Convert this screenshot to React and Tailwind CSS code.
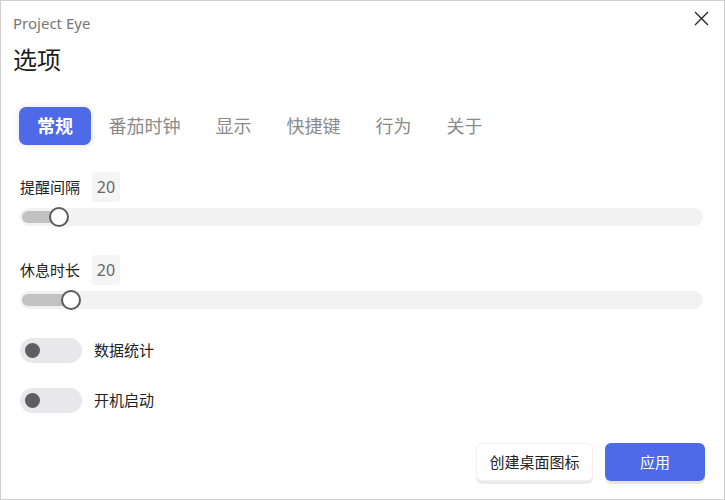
import React from "react";

const font = { fontFamily: '"Noto Sans", "Noto Sans CJK SC", sans-serif' };

function Slider({ pos }) {
  return (
    <div className="relative mt-[6px] h-[18px] w-full rounded-full bg-[#f2f2f2]">
      <div
        className="absolute left-[2px] top-[3px] h-[12px] rounded-full bg-[#c2c2c2]"
        style={{ width: pos }}
      />
      <div
        className="absolute top-1/2 h-[20px] w-[20px] -translate-x-1/2 -translate-y-1/2 rounded-full border-[2.5px] border-[#5a5a5a] bg-white"
        style={{ left: pos }}
      />
    </div>
  );
}

function Toggle({ label, className }) {
  return (
    <div className={"flex items-center " + className}>
      <div className="flex h-[25px] w-[62px] items-center rounded-full bg-[#e8e8ea] pl-[5px]">
        <div className="h-[15px] w-[15px] rounded-full bg-[#5f5f62]" />
      </div>
      <span className="ml-[12px] text-[15px] text-[#222]">{label}</span>
    </div>
  );
}

export default function App() {
  const tabs = ["番茄时钟", "显示", "快捷键", "行为", "关于"];
  return (
    <div
      className="relative flex h-[500px] w-[725px] flex-col border border-[#cfcfcf] bg-white"
      style={font}
    >
      <button className="absolute right-[15px] top-[10px] text-[#222]">
        <svg width="15" height="15" viewBox="0 0 15 15">
          <path d="M1 1L14 14M14 1L1 14" stroke="#222" strokeWidth="1.3" fill="none" />
        </svg>
      </button>
      <div className="pl-[12px] pt-[12px]">
        <div className="text-[15px] leading-[20px] text-[#777]">Project Eye</div>
        <div className="mt-[11px] text-[24px] leading-[32px] text-[#1a1a1a]">选项</div>
      </div>
      <div className="ml-[18px] mt-[31px] flex h-[38px] items-center">
        <div className="flex h-[38px] items-center rounded-[7px] bg-[#4e6ae8] px-[18px] text-[18px] font-bold text-white shadow-[0_0_6px_rgba(0,0,0,0.12)]">
          常规
        </div>
        {tabs.map((t) => (
          <div key={t} className="px-[17.5px] text-[18px] text-[#8a8a8a]">
            {t}
          </div>
        ))}
      </div>
      <div className="px-[19px] pr-[21px]">
        <div className="mt-[27px] flex h-[30px] items-center">
          <span className="text-[15px] text-[#222]">提醒间隔</span>
          <span className="ml-[12px] flex h-[30px] w-[28px] items-center justify-center rounded-[3px] bg-[#f5f5f5] text-[16px] text-[#666]">
            20
          </span>
        </div>
        <Slider pos={39} />
        <div className="mt-[29px] flex h-[30px] items-center">
          <span className="text-[15px] text-[#222]">休息时长</span>
          <span className="ml-[12px] flex h-[30px] w-[28px] items-center justify-center rounded-[3px] bg-[#f5f5f5] text-[16px] text-[#666]">
            20
          </span>
        </div>
        <Slider pos={51} />
        <Toggle label="数据统计" className="mt-[29px]" />
        <Toggle label="开机启动" className="mt-[25px]" />
      </div>
      <div className="mt-[30px] flex justify-end gap-[12px] pr-[19px]">
        <button className="flex h-[38px] w-[117px] items-center justify-center rounded-[6px] border border-[#f0f0f0] bg-white text-[15px] text-[#222] shadow-[0_3px_0_#ececec]">
          创建桌面图标
        </button>
        <button className="flex h-[38px] w-[100px] items-center justify-center rounded-[6px] bg-[#4e6ae8] text-[15px] text-white shadow-[0_3px_0_#e6e6e6]">
          应用
        </button>
      </div>
    </div>
  );
}
